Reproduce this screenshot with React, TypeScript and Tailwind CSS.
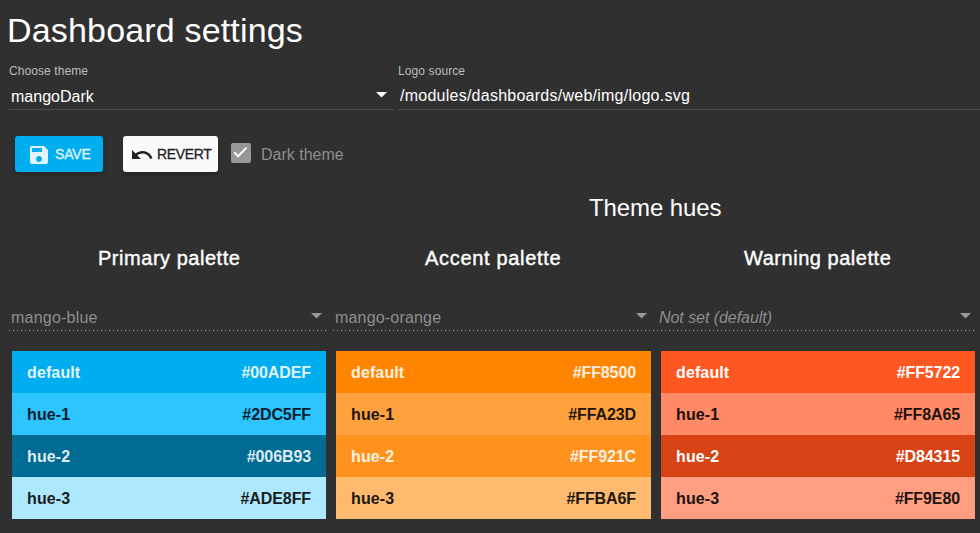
import React from "react";

type Hue = { name: string; hex: string; className: string };
type Palette = {
  title: string;
  titleClass: string;
  value: string;
  valueClass: string;
  fieldClass: string;
  swatchClass: string;
  hues: Hue[];
};

const palettes: Palette[] = [
  {
    title: "Primary palette",
    titleClass: "pl-[89px] tracking-[0.53px]",
    value: "mango-blue",
    valueClass: "tracking-[0.22px]",
    fieldClass: "w-[317px] pr-[4px]",
    swatchClass: "ml-[3px] w-[314px]",
    hues: [
      { name: "default", hex: "#00ADEF", className: "bg-[#00adef] text-[#e0f5fd]" },
      { name: "hue-1", hex: "#2DC5FF", className: "bg-[#2dc5ff] text-[#062029]" },
      { name: "hue-2", hex: "#006B93", className: "bg-[#006b93] text-[#dfecf1]" },
      { name: "hue-3", hex: "#ADE8FF", className: "bg-[#ade8ff] text-[#161d20]" },
    ],
  },
  {
    title: "Accent palette",
    titleClass: "pl-[92px] tracking-[0.68px]",
    value: "mango-orange",
    valueClass: "tracking-[0.18px]",
    fieldClass: "w-[324px] pr-[10px]",
    swatchClass: "ml-[3px] w-[315px]",
    hues: [
      { name: "default", hex: "#FF8500", className: "bg-[#ff8500] text-[#fff0e0]" },
      { name: "hue-1", hex: "#FFA23D", className: "bg-[#ffa23d] text-[#201508]" },
      { name: "hue-2", hex: "#FF921C", className: "bg-[#ff921c] text-[#fff1e3]" },
      { name: "hue-3", hex: "#FFBA6F", className: "bg-[#ffba6f] text-[#20170e]" },
    ],
  },
  {
    title: "Warning palette",
    titleClass: "pl-[87px] tracking-[0.53px]",
    value: "Not set (default)",
    valueClass: "italic tracking-[-0.05px]",
    fieldClass: "w-[318px] pr-[4px]",
    swatchClass: "ml-[4px] w-[314px]",
    hues: [
      { name: "default", hex: "#FF5722", className: "bg-[#ff5722] text-white" },
      { name: "hue-1", hex: "#FF8A65", className: "bg-[#ff8a65] text-[#20110d]" },
      { name: "hue-2", hex: "#D84315", className: "bg-[#d84315] text-white" },
      { name: "hue-3", hex: "#FF9E80", className: "bg-[#ff9e80] text-[#201410]" },
    ],
  },
];

function Caret({ className }: { className: string }) {
  return (
    <svg viewBox="0 0 11 6" className={`h-[6px] w-[11px] shrink-0 ${className}`} fill="currentColor">
      <path d="M0 0h11L5.5 5.5z" />
    </svg>
  );
}

function PaletteColumn({ palette }: { palette: Palette }) {
  return (
    <section className="min-w-0">
      <h3 className={`h-[60px] whitespace-nowrap text-[20px] leading-[24px] [-webkit-text-stroke:0.4px_white] ${palette.titleClass}`}>
        {palette.title}
      </h3>
      <div
        className={`flex h-[25px] items-start justify-between bg-[linear-gradient(to_right,#a0a0a0_25%,transparent_25%)] bg-[length:4px_1px] bg-bottom-left bg-repeat-x pl-[2px] text-[#8e8e8e] ${palette.fieldClass}`}
      >
        <span className={`text-[16px] leading-[24px] ${palette.valueClass}`}>{palette.value}</span>
        <Caret className="mt-[7px] text-[#989898]" />
      </div>
      <ul className={`mt-[20px] ${palette.swatchClass}`}>
        {palette.hues.map((hue) => (
          <li
            key={hue.name}
            className={`flex h-[42px] items-center justify-between px-[15px] pt-[2px] text-[16px] font-bold leading-[24px] ${hue.className}`}
          >
            <span className="tracking-[0.12px]">{hue.name}</span>
            <span className="tracking-[-0.1px]">{hue.hex}</span>
          </li>
        ))}
      </ul>
    </section>
  );
}

export default function App() {
  return (
    <main className="h-[533px] w-[980px] overflow-hidden bg-[#303030] font-['Liberation_Sans',Arial,sans-serif] text-white">
      <h1 className="h-[64px] pl-[7px] pt-[10px] text-[34px] leading-[40px] tracking-[0.17px]">Dashboard settings</h1>

      <div className="flex gap-[4px] pl-[9px]">
        <label className="block h-[46px] w-[385px] border-b border-[#4b4b4b]">
          <span className="block text-[12px] leading-[14px] tracking-[0.08px] text-[#bcbcbc]">Choose theme</span>
          <span className="flex justify-between pl-[2px] pr-[7px] pt-[7px] text-[16px] leading-[24px]">
            mangoDark
            <Caret className="mt-[7px] text-white" />
          </span>
        </label>
        <label className="block h-[46px] w-[582px] border-b border-[#4b4b4b]">
          <span className="block text-[12px] leading-[14px] tracking-[0.1px] text-[#bcbcbc]">Logo source</span>
          <span className="block pl-[2px] pt-[6px] text-[16px] leading-[24px] tracking-[0.25px]">
            /modules/dashboards/web/img/logo.svg
          </span>
        </label>
      </div>

      <div className="mt-[26px] flex h-[36px] items-center pl-[15px]">
        <button className="flex h-[36px] w-[88px] items-center rounded-[3px] bg-[#00adef] pl-[12px] text-[14px] text-[#e0f5fd] shadow-[0_2px_5px_rgba(0,0,0,0.26)]">
          <svg viewBox="0 0 24 24" className="mt-[2px] h-[24px] w-[24px]" fill="currentColor">
            <path d="M17 3H5c-1.11 0-2 .9-2 2v14c0 1.1.89 2 2 2h14c1.1 0 2-.9 2-2V7l-4-4zm-5 16c-1.66 0-3-1.34-3-3s1.34-3 3-3 3 1.34 3 3-1.34 3-3 3zm3-10H5V5h10v4z" />
          </svg>
          <span className="ml-[4px] tracking-[-0.15px] [-webkit-text-stroke:0.3px]">SAVE</span>
        </button>
        <button className="ml-[20px] flex h-[36px] w-[95px] items-center rounded-[3px] bg-[#fafafa] pl-[7px] text-[14px] text-[#212121] shadow-[0_2px_5px_rgba(0,0,0,0.26)]">
          <svg viewBox="0 0 24 24" className="mt-[2px] h-[24px] w-[24px]" fill="currentColor">
            <path d="M12.5 8c-2.65 0-5.05.99-6.9 2.6L2 7v9h9l-3.62-3.62c1.39-1.16 3.16-1.88 5.12-1.88 3.54 0 6.55 2.31 7.6 5.5l2.37-.78C21.08 11.03 17.15 8 12.5 8z" />
          </svg>
          <span className="ml-[3px] tracking-[-0.35px] [-webkit-text-stroke:0.3px]">REVERT</span>
        </button>
        <div className="mb-[2px] ml-[13px] flex h-[20px] w-[20px] items-center justify-center rounded-[2px] bg-[#979797]">
          <svg viewBox="0 0 20 20" className="h-[20px] w-[20px]" fill="none" stroke="#fafafa" strokeWidth="2">
            <path d="M3.3 9.3l3.8 3.9 8.4-8.6" />
          </svg>
        </div>
        <span className="ml-[10px] mt-[2px] text-[16px] leading-[24px] text-[#8e8e8e]">Dark theme</span>
      </div>

      <h2 className="mt-[22px] h-[52px] pl-[589px] text-[24px] leading-[28px] tracking-[-0.1px]">Theme hues</h2>

      <div className="grid grid-cols-[324px_324px_318px] pl-[9px]">
        {palettes.map((palette) => (
          <PaletteColumn key={palette.title} palette={palette} />
        ))}
      </div>
    </main>
  );
}
